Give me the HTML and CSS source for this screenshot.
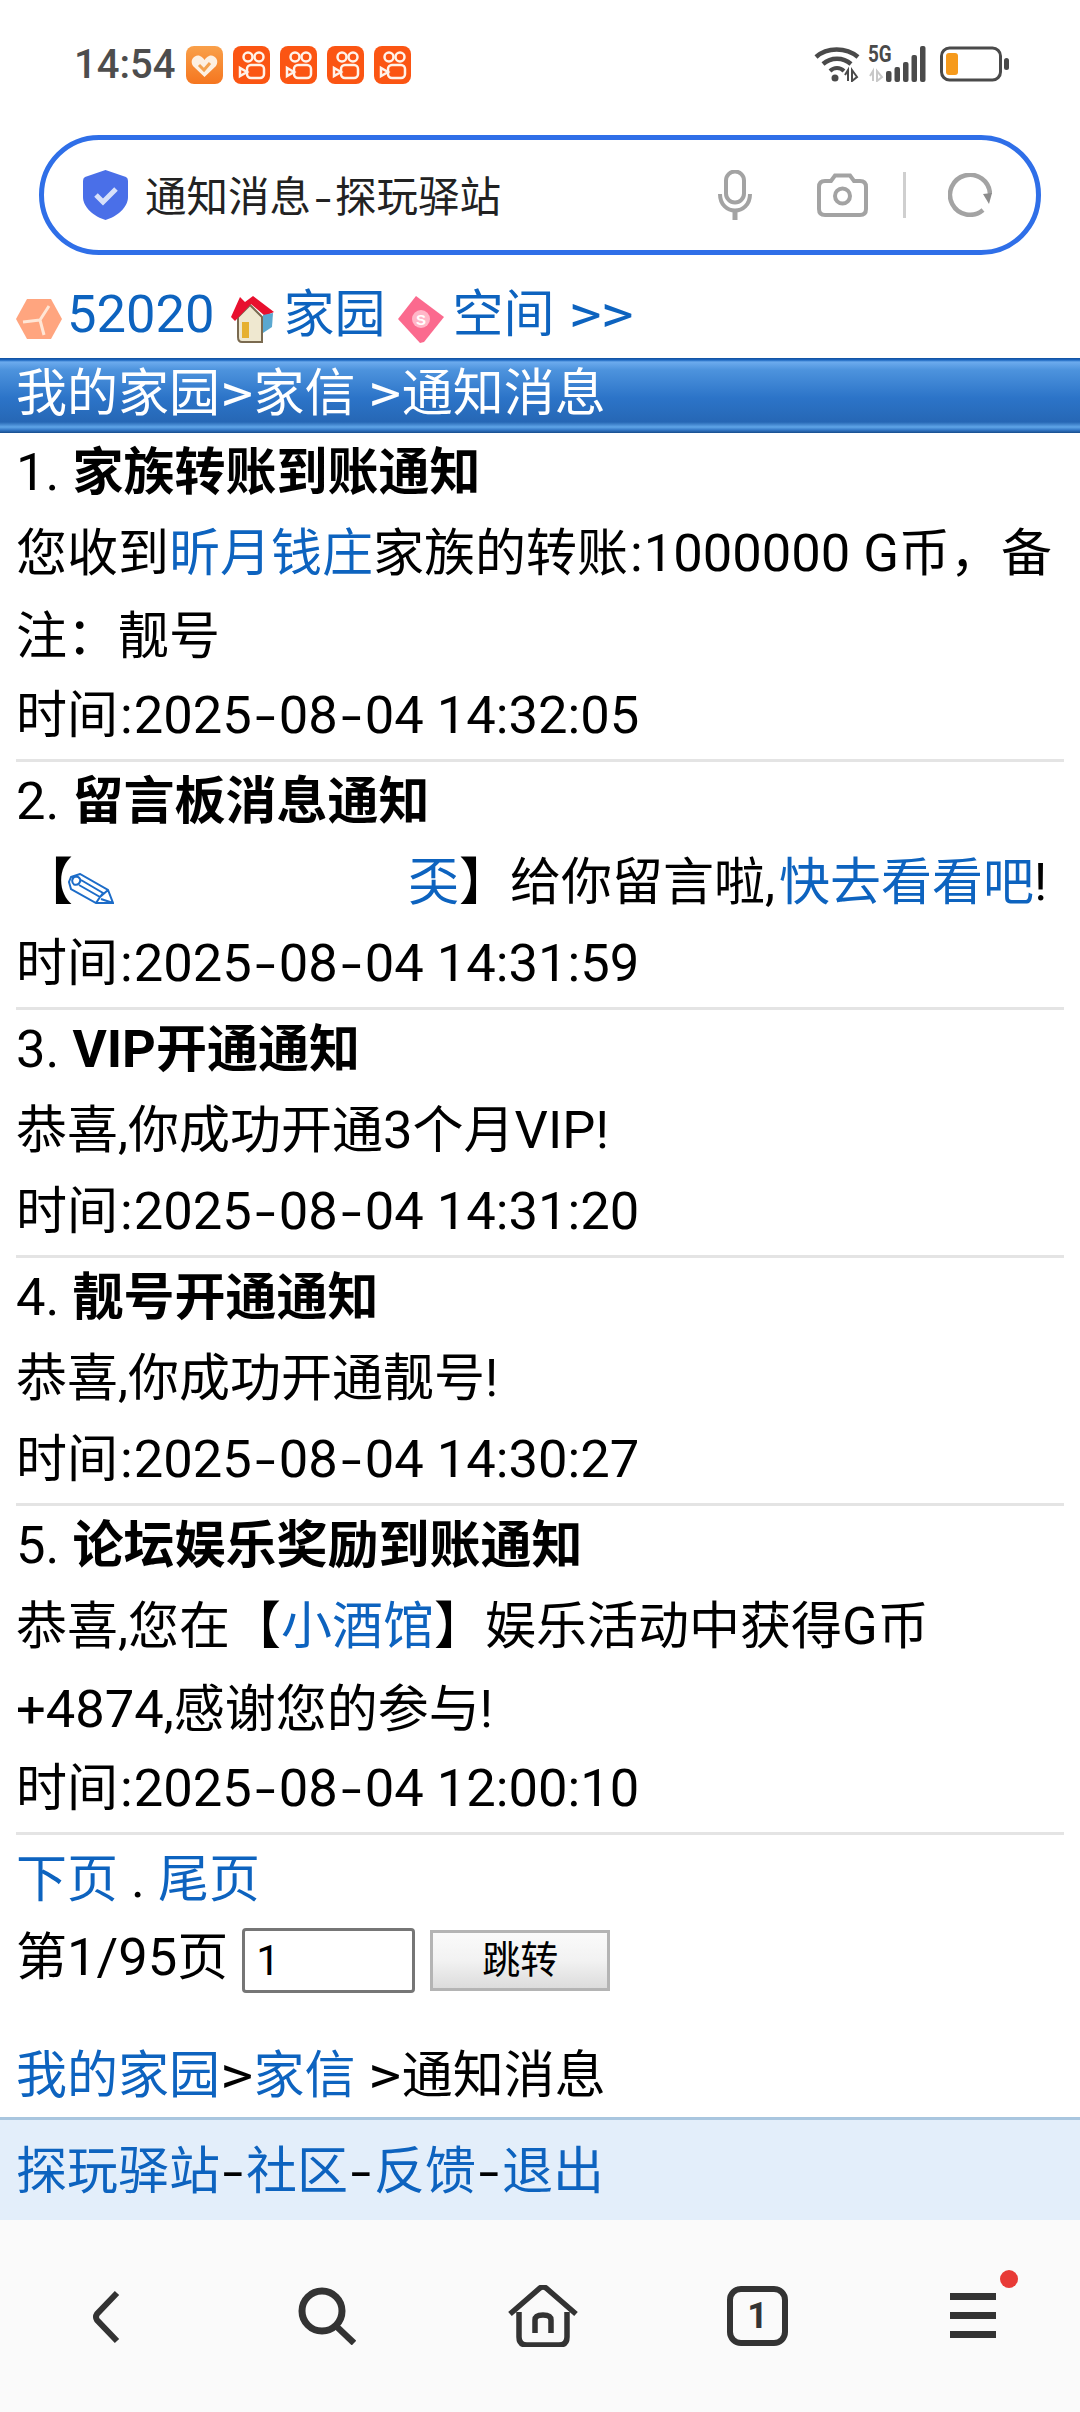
FILE: index.html
```html
<!DOCTYPE html>
<html lang="zh-CN">
<head>
<meta charset="utf-8">
<title>通知消息-探玩驿站</title>
<link rel="stylesheet" href="styles.css">
</head>
<body>
<div class="phone">
  <header class="status">
    <div class="status-left">
      <span class="clock">14:54</span>
      <svg class="app" viewBox="0 0 37 38"><defs><linearGradient id="hg" x1="0" y1="0" x2="0" y2="1"><stop offset="0" stop-color="#f9a04a"/><stop offset="1" stop-color="#f5761f"/></linearGradient></defs><rect width="37" height="38" rx="8" fill="url(#hg)"/><path d="M18.5 31 L7 20 C3 14 9 8 14 10 C16 11 17.5 12 18.5 14 C19.5 12 21 11 23 10 C28 8 34 14 30 20 Z" fill="#fdf0e2"/><path d="M13 19 L18 24 L24 17" fill="none" stroke="#f3a24f" stroke-width="3"/></svg>
      <svg class="app" viewBox="0 0 37 38"><use href="#ks"/></svg>
      <svg class="app" viewBox="0 0 37 38"><use href="#ks"/></svg>
      <svg class="app" viewBox="0 0 37 38"><use href="#ks"/></svg>
      <svg class="app" viewBox="0 0 37 38"><use href="#ks"/></svg>
    </div>
    <div class="status-right">
      <svg class="wifi" viewBox="0 0 46 36"><path d="M2 11 C13 1 32 1 44 11" fill="none" stroke="#4a4a4a" stroke-width="4.5"/><path d="M9 18 C17 11 29 11 37 18" fill="none" stroke="#4a4a4a" stroke-width="4.5"/><path d="M16 25 C20 21 26 21 30 25" fill="none" stroke="#4a4a4a" stroke-width="4"/><circle cx="21" cy="32" r="3.5" fill="#4a4a4a"/><path d="M34 35 V24 L31 29 M38 24 V35 L43 31 Z" fill="none" stroke="#4a4a4a" stroke-width="2"/></svg>
      <div class="signal">
        <span class="five-g">5G</span>
        <svg class="bars" viewBox="0 0 58 36"><path d="M5 35 V25 L2 30 M9 25 V35 L14 31 Z" fill="none" stroke="#c8c8c8" stroke-width="2"/><rect x="18" y="25" width="5.5" height="11" rx="2" fill="#4a4a4a"/><rect x="26.5" y="21" width="5.5" height="15" rx="2" fill="#4a4a4a"/><rect x="35" y="16" width="5.5" height="20" rx="2" fill="#4a4a4a"/><rect x="43.5" y="9" width="5.5" height="27" rx="2" fill="#4a4a4a"/><rect x="52" y="0" width="5.5" height="36" rx="2" fill="#4a4a4a"/></svg>
      </div>
      <svg class="battery" viewBox="0 0 69 36"><rect x="1.5" y="2" width="59" height="32" rx="8" fill="none" stroke="#4a4a4a" stroke-width="3"/><rect x="6" y="7" width="12" height="22" rx="3" fill="#f69a1c"/><rect x="64" y="12" width="5" height="12" rx="2.5" fill="#4a4a4a"/></svg>
    </div>
  </header>

  <div class="addr">
    <svg class="shield" viewBox="0 0 45 50"><path d="M22.5 0 L43 7 Q45 8 45 11 V27 C45 38 33 47 22.5 50 C12 47 0 38 0 27 V11 Q0 8 2 7 Z" fill="#4a6fe8"/><path d="M13 25 L20 32 L33 19" fill="none" stroke="#d7e0fa" stroke-width="5"/></svg>
    <span class="addr-title">通知消息<span class="hy">-</span>探玩驿站</span>
    <svg class="mic" viewBox="0 0 34 50"><rect x="8" y="1.5" width="18" height="31" rx="9" fill="none" stroke="#a3a3a3" stroke-width="4"/><path d="M2 24 C2 46 32 46 32 24" fill="none" stroke="#a3a3a3" stroke-width="4"/><path d="M17 39 V50" stroke="#a3a3a3" stroke-width="5"/></svg>
    <svg class="cam" viewBox="0 0 51 44"><path d="M8 8 H14 L18 2.5 H33 L37 8 H43 Q49 8 49 14 V36 Q49 42 43 42 H8 Q2 42 2 36 V14 Q2 8 8 8 Z" fill="none" stroke="#a3a3a3" stroke-width="4"/><circle cx="25.5" cy="23" r="7.5" fill="none" stroke="#a3a3a3" stroke-width="4"/></svg>
    <span class="addr-sep"></span>
    <svg class="reload" viewBox="0 0 44 44"><path d="M35 37 A20 20 0 1 1 42 21" fill="none" stroke="#a3a3a3" stroke-width="4.5"/><path d="M35 21 L44 20 L41 31 Z" fill="#8c8c8c"/></svg>
  </div>

  <main class="page">
    <nav class="topnav">
      <svg class="nav-ico hex" viewBox="0 0 46 44"><path d="M11 2 H35 L46 22 L35 42 H11 L0 22 Z" fill="#ffa57f"/><path d="M24 23 L33 9 M24 23 L7 25 M24 23 L28 38" stroke="#ffe6d6" stroke-width="3"/></svg>
      <a class="link lat num" href="#">52020</a>
      <svg class="nav-ico house" viewBox="0 0 46 48"><path d="M9 22 V42 Q9 47 13 47 H33 V22 L21 10 Z" fill="#efe8d0" stroke="#7a6a50" stroke-width="2"/><path d="M2 22 L11 2 L16 7 L24 1 L45 17 L36 21 L22 9 L6 26 Z" fill="#e8102e"/><path d="M34 20 L44 18 L43 32 L34 38 Z" fill="#5aa8d0"/><rect x="13" y="27" width="7" height="16" fill="#e6b030"/></svg>
      <a class="link home-link" href="#">家园</a>
      <svg class="nav-ico diamond" viewBox="0 0 46 47"><path d="M18 0 L46 21 L26 46 L22 47 L0 23 Z" fill="#fb6a8e"/><circle cx="23" cy="23" r="9" fill="#ffb7c8"/><text class="diamond-s" x="23" y="29">S</text></svg>
      <a class="link space-link" href="#">空间</a>
      <a class="link more" href="#"><span class="gt gt-more">&gt;</span><span class="gt gt-more">&gt;</span></a>
    </nav>

    <div class="titlebar">我的家园<span class="gt">&gt;</span>家信 <span class="gt">&gt;</span>通知消息</div>

    <section class="list">
      <article class="item">
        <div class="line"><span class="lat">1. </span><b>家族转账到账通知</b></div>
        <div class="line line-wrap">您收到<a class="link" href="#">昕月钱庄</a>家族的转账<span class="lat"><span class="colon">:</span>1000000 G</span>币，备注：靓号</div>
        <div class="line">时间<span class="lat"><span class="colon">:</span>2025<span class="hy">-</span>08<span class="hy">-</span>04 14:32:05</span></div>
      </article>
      <article class="item">
        <div class="line"><span class="lat">2. </span><b>留言板消息通知</b></div>
        <div class="line line-msg">【<a class="link" href="#"><svg class="pencil" viewBox="0 0 46 31"><path d="M3 4 L12 1 L40 17 L45 30 L28 30 L3 16 L1 9 Z M8 3.5 C4 4 3 9 6 11.5 C10 13 13 9 12 6 C11 4 10 3.5 8 3.5 Z M11 12 L32 24 L28 30 M13 7 L35 20 L32 24 L40 17 M33 26 L45 30" fill="none" stroke="#1c6cc8" stroke-width="2"/></svg><span class="blank"></span>奀</a>】给你留言啦<span class="comma">,</span><a class="link" href="#">快去看看吧</a>!</div>
        <div class="line">时间<span class="lat"><span class="colon">:</span>2025<span class="hy">-</span>08<span class="hy">-</span>04 14:31:59</span></div>
      </article>
      <article class="item">
        <div class="line"><span class="lat">3. </span><b><span class="lat">VIP</span>开通通知</b></div>
        <div class="line">恭喜,你成功开通<span class="lat">3</span>个月<span class="lat">VIP!</span></div>
        <div class="line">时间<span class="lat"><span class="colon">:</span>2025<span class="hy">-</span>08<span class="hy">-</span>04 14:31:20</span></div>
      </article>
      <article class="item">
        <div class="line"><span class="lat">4. </span><b>靓号开通通知</b></div>
        <div class="line">恭喜,你成功开通靓号!</div>
        <div class="line">时间<span class="lat"><span class="colon">:</span>2025<span class="hy">-</span>08<span class="hy">-</span>04 14:30:27</span></div>
      </article>
      <article class="item">
        <div class="line"><span class="lat">5. </span><b>论坛娱乐奖励到账通知</b></div>
        <div class="line line-wrap">恭喜,您在【<a class="link" href="#">小酒馆</a>】娱乐活动中获得<span class="lat">G</span>币<span class="lat">+4874</span>,感谢您的参与!</div>
        <div class="line">时间<span class="lat"><span class="colon">:</span>2025<span class="hy">-</span>08<span class="hy">-</span>04 12:00:10</span></div>
      </article>
    </section>

    <div class="pager">
      <div class="line"><a class="link" href="#">下页</a><span class="lat"> . </span><a class="link" href="#">尾页</a></div>
      <div class="jump"><span class="jump-label">第<span class="lat">1/95</span>页</span><span class="jump-input">1</span><span class="jump-btn">跳转</span></div>
    </div>

    <div class="crumbs"><a class="link" href="#">我的家园</a><span class="gt">&gt;</span><a class="link" href="#">家信</a> <span class="gt">&gt;</span>通知消息</div>

    <footer class="foot"><a class="link" href="#">探玩驿站</a><span class="hy">-</span><a class="link" href="#">社区</a><span class="hy">-</span><a class="link" href="#">反馈</a><span class="hy">-</span><a class="link" href="#">退出</a></footer>
  </main>

  <nav class="bottom">
    <svg class="b-back" viewBox="0 0 28 54"><path d="M25 3 L5 24 Q3 27 5 30 L25 51" fill="none" stroke="#333" stroke-width="6"/></svg>
    <svg class="b-search" viewBox="0 0 58 58"><circle cx="24" cy="24" r="20" fill="none" stroke="#333" stroke-width="7"/><path d="M37 38 L56 56" stroke="#333" stroke-width="6.5"/></svg>
    <svg class="b-home" viewBox="0 0 70 62"><path d="M2 29 L32 3 Q35 1 38 3 L68 29" fill="none" stroke="#333" stroke-width="5.5"/><path d="M11 27 V52 Q11 60 19 60 H51 Q59 60 59 52 V27" fill="none" stroke="#333" stroke-width="5.5"/><path d="M27 48 V35 Q27 30 35 30 Q43 30 43 35 V48" fill="none" stroke="#333" stroke-width="5.5"/></svg>
    <div class="b-tabs">1</div>
    <div class="b-menu"><i></i><i></i><i></i><em></em></div>
  </nav>

  <svg class="defs" width="0" height="0"><defs><g id="ks"><rect width="37" height="38" rx="8" fill="#fb5513"/><circle cx="15" cy="11" r="4.5" fill="none" stroke="#fff3ea" stroke-width="2.5"/><circle cx="26" cy="11" r="4.5" fill="none" stroke="#fff3ea" stroke-width="2.5"/><rect x="14" y="19" width="17" height="13" rx="4" fill="none" stroke="#fff3ea" stroke-width="2.5"/><path d="M14 26 L7 22 V30 Z" fill="none" stroke="#fff3ea" stroke-width="2.5"/></g></defs></svg>
</div>
</body>
</html>
```

FILE: styles.css
```css
* { box-sizing: border-box; }
html, body { margin: 0; padding: 0; background: #fff; }
.phone {
  width: 1080px; height: 2412px; overflow: hidden; display: flex; flex-direction: column;
  font-family: "Roboto", "Noto Sans CJK SC", sans-serif; color: #000; background: #fff;
}
.defs { position: absolute; }
.status { height: 135px; flex: none; display: flex; justify-content: space-between; padding: 46px 71px 0 74px; }
.status-left { display: flex; align-items: flex-start; gap: 10px; height: 38px; }
.clock { font: 500 40px/38px "Roboto", sans-serif; color: #4d4d4d; width: 102px; }
.app { width: 37px; height: 38px; }
.status-right { display: flex; align-items: flex-start; }
.wifi { width: 46px; height: 36px; }
.signal { position: relative; width: 58px; height: 36px; margin-left: 8px; }
.bars { width: 58px; height: 36px; display: block; }
.five-g { position: absolute; left: 0; top: 0; font: 700 23px/17px "Roboto", sans-serif; color: #4a4a4a; transform: scaleX(.82); transform-origin: left; }
.battery { width: 69px; height: 36px; margin-left: 14px; }

.addr {
  flex: none; width: 1002px; height: 120px; margin-left: 39px; border: 5px solid #2f6fe8; border-radius: 60px;
  display: flex; align-items: center; padding-left: 39px;
}
.shield { width: 45px; height: 50px; flex: none; }
.addr-title { font: 400 41.5px/1 "Noto Sans CJK SC", sans-serif; color: #222; margin-left: 17px; width: 573px; white-space: nowrap; }
.mic { width: 34px; height: 50px; }
.cam { width: 51px; height: 44px; margin-left: 65px; }
.addr-sep { width: 3px; height: 46px; background: #cfcfcf; margin-left: 35px; }
.reload { width: 44px; height: 44px; margin-left: 42px; }

.page { flex: 1; display: flex; flex-direction: column; font-size: 51px; line-height: 81px; min-height: 0; }
.link { color: #0d63bf; text-decoration: none; }
.lat { font-size: 52.5px; line-height: 1; }
.colon { padding: 0 1px 0 2px; }
.comma { padding-right: 4px; }
.hy { display: inline-block; width: 26px; text-align: center; transform: scaleX(1.45); font-size: 50.5px; line-height: 1; }
.lat .hy { width: 27px; }
.addr-title .hy { width: 24px; font-size: 41.5px; transform: scaleX(1.3); }
.gt { display: inline-block; width: 33.5px; text-align: center; transform: scaleX(1.25); line-height: 1; }
.gt-more { width: 32.5px; }

.topnav { height: 103px; flex: none; display: flex; align-items: center; padding: 16px 0 0 16px; white-space: pre; }
.nav-ico { flex: none; }
.hex { width: 46px; height: 44px; margin-top: 9px; }
.num { margin-left: 5px; }
.house { width: 46px; height: 48px; margin: 9px 0 0 14px; }
.home-link { margin-left: 9px; }
.diamond { width: 46px; height: 47px; margin: 9px 0 0 12px; }
.space-link { margin-left: 9px; }
.diamond-s { font: 700 15px "Liberation Sans", sans-serif; fill: #fff; text-anchor: middle; }
.more { margin-left: 14px; }
.titlebar {
  height: 75px; flex: none; padding-left: 16px; line-height: 72px; color: #fff;
  background: linear-gradient(#0f4f9e 0, #1d67c0 2px, #6cabee 4px, #4d93dd 12px, #2c74c8 40px, #2667b5 64px, #5fa5e8 69px, #3478c6 72px, #174c8c 75px);
}
.list { flex: none; padding: 0 16px; }
.list .line { line-height: 79px; padding-bottom: 2px; }
.list .line-wrap { line-height: 83px; padding-bottom: 0; margin: -2px 0; }
.item { border-bottom: 3px solid #e4e4e4; padding-bottom: 2px; }
.list .line-msg { white-space: nowrap; padding-left: 6px; }
.pencil { width: 46px; height: 31px; vertical-align: -4px; margin-left: -5px; }
.blank { display: inline-block; width: 294px; }
.pager { flex: none; padding: 0 16px; margin-top: 4px; }
.jump { display: flex; align-items: center; height: 81px; }
.jump-label { line-height: 78px; padding-bottom: 6px; }
.jump-input { width: 173px; height: 65px; margin-left: 14px; border: 3px solid #767676; border-radius: 4px; font-size: 42px; line-height: 59px; padding-left: 11px; }
.jump-btn {
  width: 180px; height: 61px; margin-left: 15px; border: 3px solid #b4b4b4; font-size: 38px; line-height: 55px; text-align: center;
  background: linear-gradient(#fafafa, #f2f2f2 50%, #dcdcdc);
}
.crumbs { flex: none; padding: 0 16px; margin-top: 34px; height: 82px; }
.foot { flex: none; height: 103px; padding-left: 16px; line-height: 104px; background: #e3eefa; border-top: 3px solid #a9c6df; }

.bottom { flex: none; height: 192px; background: #fafafa; position: relative; display: flex; }
.bottom > * { position: absolute; }
.b-back { left: 92px; top: 70px; width: 28px; height: 54px; }
.b-search { left: 298px; top: 67px; width: 58px; height: 58px; }
.b-home { left: 508px; top: 65px; width: 70px; height: 62px; }
.b-tabs { left: 727px; top: 66px; width: 61px; height: 60px; border: 6px solid #333; border-radius: 14px; font: 700 36px/48px "Roboto", sans-serif; text-align: center; color: #333; }
.b-menu { left: 950px; top: 73px; width: 46px; height: 45px; display: flex; flex-direction: column; justify-content: space-between; }
.b-menu i { display: block; height: 7px; background: #333; }
.b-menu em { position: absolute; left: 50px; top: -23px; width: 18px; height: 18px; border-radius: 50%; background: #e83a36; }
```
